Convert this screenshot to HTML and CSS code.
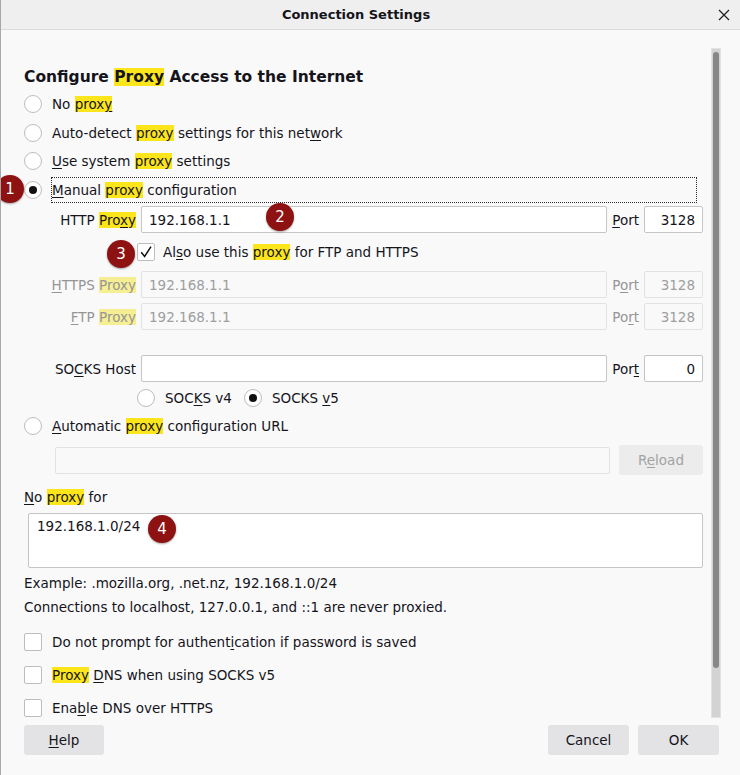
FILE: index.html
```html
<!doctype html>
<html>
  <head>
    <meta charset="utf-8" />
    <title>Connection Settings</title>
    <link rel="stylesheet" href="styles.css">
  </head>
  <body>
    <div class="dialog">
      <header class="titlebar">
        <span class="title">Connection Settings</span>
        <button class="close" aria-label="Close">
          <svg width="12" height="12" viewBox="0 0 12 12"><path d="M1 1 L11 11 M11 1 L1 11" stroke="#222" stroke-width="1.3" fill="none"/></svg>
        </button>
      </header>

      <div class="body">
        <main class="content">
          <h1 class="heading">Configure <mark>Proxy</mark> Access to the Internet</h1>

          <label class="option"><span class="radio"></span><span class="option-text">No <mark>prox<u>y</u></mark></span></label>
          <label class="option"><span class="radio"></span><span class="option-text">Auto-detect <mark>proxy</mark> settings for this net<u>w</u>ork</span></label>
          <label class="option"><span class="radio"></span><span class="option-text"><u>U</u>se system <mark>proxy</mark> settings</span></label>
          <label class="option focused"><span class="radio checked"></span><span class="option-text"><u>M</u>anual <mark>proxy</mark> configuration</span></label>

          <div class="proxy-grid">
            <label class="field-label">HTTP <mark>Pro<u>x</u>y</mark></label>
            <input class="field" type="text" value="192.168.1.1" />
            <label class="port-label"><u>P</u>ort</label>
            <input class="field port" type="text" value="3128" />

            <label class="option also">
              <span class="checkbox">
                <svg width="18" height="18" viewBox="0 0 18 18"><path d="M4.2 9.2 L7.6 13.4 L14 3.6" stroke="#111" stroke-width="1.5" fill="none"/></svg>
              </span>
              <span>Al<u>s</u>o use this <mark>proxy</mark> for FTP and HTTPS</span>
            </label>

            <label class="field-label disabled"><u>H</u>TTPS <mark>Proxy</mark></label>
            <input class="field" type="text" value="192.168.1.1" disabled />
            <label class="port-label disabled">P<u>o</u>rt</label>
            <input class="field port" type="text" value="3128" disabled />

            <label class="field-label disabled"><u>F</u>TP <mark>Proxy</mark></label>
            <input class="field" type="text" value="192.168.1.1" disabled />
            <label class="port-label disabled">Po<u>r</u>t</label>
            <input class="field port" type="text" value="3128" disabled />

            <div class="grid-spacer"></div>

            <label class="field-label">SO<u>C</u>KS Host</label>
            <input class="field" type="text" value="" />
            <label class="port-label">Por<u>t</u></label>
            <input class="field port" type="text" value="0" />
          </div>

          <div class="socks-versions">
            <label class="option small"><span class="radio"></span><span>SOC<u>K</u>S v4</span></label>
            <label class="option small"><span class="radio checked"></span><span>SOCKS <u>v</u>5</span></label>
          </div>

          <label class="option auto"><span class="radio"></span><span class="option-text"><u>A</u>utomatic <mark>proxy</mark> configuration URL</span></label>

          <div class="url-row">
            <input class="field" type="text" value="" disabled />
            <button class="btn reload" disabled>R<u>e</u>load</button>
          </div>

          <div class="noproxy-label"><u>N</u>o <mark>proxy</mark> for</div>
          <textarea class="noproxy">192.168.1.0/24</textarea>

          <p class="hint">Example: .mozilla.org, .net.nz, 192.168.1.0/24</p>
          <p class="hint">Connections to localhost, 127.0.0.1, and ::1 are never proxied.</p>

          <div class="checks">
            <label class="option check"><span class="checkbox"></span><span>Do not prompt for authent<u>i</u>cation if password is saved</span></label>
            <label class="option check"><span class="checkbox"></span><span><mark>Proxy</mark> <u>D</u>NS when using SOCKS v5</span></label>
            <label class="option check"><span class="checkbox"></span><span>Ena<u>b</u>le DNS over HTTPS</span></label>
          </div>
        </main>

        <div class="scrollbar"><div class="thumb"></div></div>
      </div>

      <footer class="footer">
        <button class="btn help"><u>H</u>elp</button>
        <div class="spacer"></div>
        <button class="btn">Cancel</button>
        <button class="btn">OK</button>
      </footer>

      <span class="badge b1">1</span>
      <span class="badge b2">2</span>
      <span class="badge b3">3</span>
      <span class="badge b4">4</span>
    </div>
  </body>
</html>
```

FILE: styles.css
```css
body {
  margin: 0;
  font-family: "DejaVu Sans", "Noto Sans", sans-serif;
  font-size: 13.5px;
  color: #15141a;
  background: #f9f9fa;
}
.dialog {
  position: relative;
  width: 740px;
  height: 775px;
  box-sizing: border-box;
  border-left: 1px solid #a8a8a8;
  display: flex;
  flex-direction: column;
  overflow: hidden;
}
mark {
  background: #fce61b;
  color: inherit;
}
u {
  text-underline-offset: 2px;
}

/* title bar */
.titlebar {
  height: 29px;
  flex: none;
  display: flex;
  align-items: center;
  background: #efefef;
  border-bottom: 1px solid #dadada;
}
.title {
  flex: 1;
  text-align: center;
  font-size: 13px;
  font-weight: bold;
}
.close {
  width: 26px;
  height: 24px;
  margin-right: 3px;
  padding: 0;
  border: none;
  background: none;
  display: flex;
  align-items: center;
  justify-content: center;
}

/* scrolling body */
.body {
  flex: 1;
  display: flex;
  min-height: 0;
  overflow: hidden;
}
.content {
  flex: 1;
  padding: 37px 8px 0 23px;
  min-width: 0;
}
.scrollbar {
  width: 10px;
  flex: none;
  margin: 18px 19px 2px 0;
  box-sizing: border-box;
  background: #d3d3d3;
  border: 1px solid #e2e2e2;
}
.thumb {
  height: 616px;
  margin: 3px 1px;
  border-radius: 3px;
  background: #878787;
}

.heading {
  margin: 0 0 3px;
  font-size: 15.5px;
  font-weight: bold;
  line-height: 20px;
}

/* radios and checkboxes */
.option {
  display: flex;
  align-items: center;
  gap: 9px;
  height: 28.5px;
}
.option-text {
  border: 1px solid transparent;
  line-height: 24px;
}
.option.focused .option-text {
  flex: 1;
  margin-right: 6px;
  border: 1px dotted #2b2b2b;
}
.radio {
  width: 18px;
  height: 18px;
  flex: none;
  box-sizing: border-box;
  border: 1px solid #bdbdbd;
  border-radius: 50%;
  background: #fff;
  display: flex;
  align-items: center;
  justify-content: center;
}
.radio.checked::after {
  content: "";
  width: 8px;
  height: 8px;
  border-radius: 50%;
  background: #111;
}
.checkbox {
  width: 18px;
  height: 18px;
  flex: none;
  box-sizing: border-box;
  border: 1px solid #bdbdbd;
  border-radius: 2px;
  background: #fff;
  display: flex;
  align-items: center;
  justify-content: center;
}
.checkbox svg {
  flex: none;
}

/* manual proxy grid */
.proxy-grid {
  display: grid;
  grid-template-columns: 112px 1fr auto 59px;
  column-gap: 5px;
  row-gap: 5px;
  align-items: center;
  margin-top: 2px;
}
.field-label {
  text-align: right;
  white-space: nowrap;
}
.disabled {
  color: #959595;
}
.disabled mark {
  background: #f6ee93;
}
.field {
  width: 100%;
  height: 27px;
  box-sizing: border-box;
  margin: 0;
  padding: 0 7px;
  font: inherit;
  color: inherit;
  background: #fff;
  border: 1px solid #c5c5c7;
  border-radius: 2px;
  outline: none;
}
.field.port {
  text-align: right;
}
.field:disabled {
  background: #f9f9fa;
  border-color: #e2e2e3;
  color: #9e9e9e;
}
.option.also {
  grid-column: 2 / -1;
  margin-left: -4px;
  height: 28px;
  gap: 8px;
}
.grid-spacer {
  grid-column: 1 / -1;
  height: 15px;
}

.socks-versions {
  display: flex;
  gap: 12px;
  margin: 5px 0 0 113px;
}
.option.small {
  height: 22px;
  gap: 10px;
}
.option.auto {
  height: 28px;
  margin-top: 3px;
}

.url-row {
  display: flex;
  align-items: center;
  gap: 9px;
  height: 30px;
  margin: 5px 0 0 31px;
}
.url-row .field {
  flex: 1;
}

.noproxy-label {
  margin-top: 13px;
  line-height: 18px;
}
.noproxy {
  display: block;
  width: calc(100% - 4px);
  height: 55px;
  box-sizing: border-box;
  margin: 7px 0 0 4px;
  padding: 4px 8px;
  font: inherit;
  color: inherit;
  background: #fff;
  border: 1px solid #c5c5c7;
  border-radius: 2px;
  resize: none;
}
.hint {
  margin: 6px 0 0;
  line-height: 18px;
}
.checks {
  margin-top: 9.5px;
}
.option.check {
  height: 33px;
  gap: 10px;
}

/* buttons */
.btn {
  height: 30px;
  width: 81px;
  padding: 0;
  font: inherit;
  color: inherit;
  background: #e3e3e5;
  border: none;
  border-radius: 3px;
}
.btn.help {
  width: 80px;
}
.btn.reload {
  width: 84px;
  flex: none;
  background: #ececed;
  color: #a3a3a3;
}
.footer {
  flex: none;
  display: flex;
  gap: 9px;
  padding: 5px 21px 20px 23px;
}
.spacer {
  flex: 1;
}

/* numbered callouts */
.badge {
  position: absolute;
  width: 28px;
  height: 28px;
  border-radius: 50%;
  background: #8e1212;
  color: #fff;
  font-size: 15px;
  display: flex;
  align-items: center;
  justify-content: center;
  box-shadow: 0 1px 2px rgba(0, 0, 0, 0.35);
}
.b1 {
  left: -5px;
  top: 175px;
}
.b2 {
  left: 265px;
  top: 203px;
}
.b3 {
  left: 106px;
  top: 240px;
}
.b4 {
  left: 147px;
  top: 515px;
}
```
